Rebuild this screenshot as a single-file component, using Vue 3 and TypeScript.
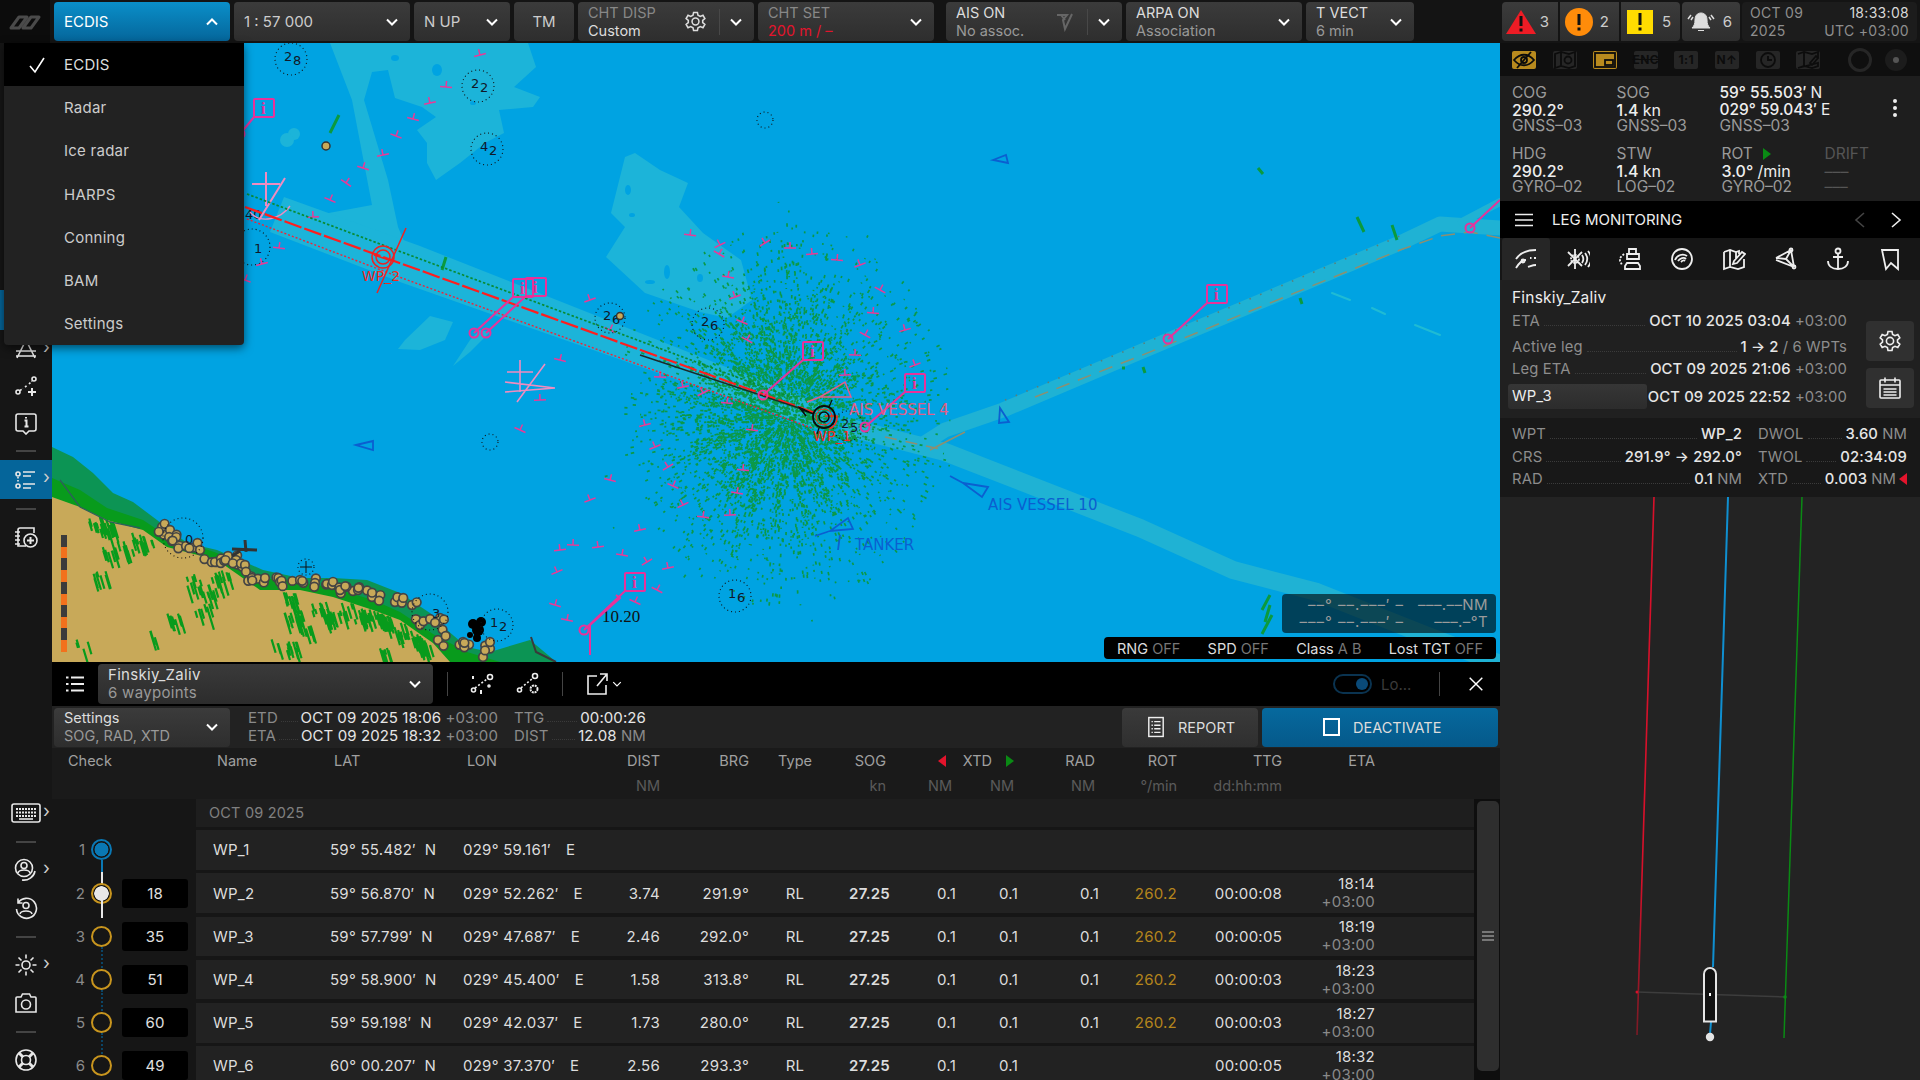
<template>
  <div class="app">
    <div class="main">
      <!-- top toolbar -->
      <div class="topbar">
        <div class="logo">
          <svg width="34" height="18" viewBox="0 0 34 18"><path d="M3 15 11 4h8l-8 11zM15 15l8-11h8l-8 11z" fill="none" stroke="#4a4a4a" stroke-width="3" stroke-linejoin="round"/></svg>
        </div>
        <button class="tb tb-mode"><span>ECDIS</span><svg class="chev" viewBox="0 0 16 16"><path d="M3 10.5l5-5 5 5"/></svg></button>
        <button class="tb w176"><span class="big">1 : 57 000</span><svg class="chev" viewBox="0 0 16 16"><path d="M3 5.5l5 5 5-5"/></svg></button>
        <button class="tb w96"><span class="big">N UP</span><svg class="chev" viewBox="0 0 16 16"><path d="M3 5.5l5 5 5-5"/></svg></button>
        <button class="tb w60 center"><span class="big">TM</span></button>
        <button class="tb w176">
          <span class="two"><i class="dim">CHT DISP</i><b>Custom</b></span>
          <svg class="gear" viewBox="0 0 24 24"><circle cx="12" cy="12" r="3.6"/><path d="M10 2.5h4l.6 3 2.4 1.2 2.8-1.2 2 3.4-2.3 2v2.2l2.3 2-2 3.4-2.8-1.2-2.4 1.2-.6 3h-4l-.6-3L7 17.3l-2.8 1.2-2-3.4 2.3-2v-2.2l-2.3-2 2-3.4L7 6.7l2.4-1.2z"/></svg>
          <span class="vsep"></span>
          <svg class="chev" viewBox="0 0 16 16"><path d="M3 5.5l5 5 5-5"/></svg>
        </button>
        <button class="tb w176">
          <span class="two"><i class="dim">CHT SET</i><b class="red">200 m / –</b></span>
          <svg class="chev" viewBox="0 0 16 16"><path d="M3 5.5l5 5 5-5"/></svg>
        </button>
        <button class="tb w176 gap-l">
          <span class="two"><b>AIS ON</b><i>No assoc.</i></span>
          <svg class="ais" viewBox="0 0 20 20"><path d="M2 3h10l-4 5 2 9 7-15M6 3l4 5"/></svg>
          <span class="vsep"></span>
          <svg class="chev" viewBox="0 0 16 16"><path d="M3 5.5l5 5 5-5"/></svg>
        </button>
        <button class="tb w176">
          <span class="two"><b>ARPA ON</b><i>Association</i></span>
          <svg class="chev" viewBox="0 0 16 16"><path d="M3 5.5l5 5 5-5"/></svg>
        </button>
        <button class="tb w108">
          <span class="two"><b>T VECT</b><i>6 min</i></span>
          <svg class="chev" viewBox="0 0 16 16"><path d="M3 5.5l5 5 5-5"/></svg>
        </button>
      </div>

      <div class="body">
        <!-- left rail -->
        <div class="rail">
          <div class="rail-spacer"></div>
          <div class="rail-item rail-hidden"></div>
          <div class="rail-item short">
            <svg class="ic" viewBox="0 0 24 24"><path d="M3 21 12 3l9 18M2 14h20M2 19h20"/></svg><em class="more">›</em>
          </div>
          <div class="rail-item short">
            <svg class="ic" viewBox="0 0 24 24"><circle cx="4" cy="18" r="2"/><circle cx="20" cy="5" r="2"/><path d="M6 16.5l3-2M11 13l2-1.5M15 10l3-3" stroke-dasharray="2 1.5"/><path d="M18 14v8M14 18h8" stroke-width="2"/></svg>
          </div>
          <div class="rail-item short">
            <svg class="ic" viewBox="0 0 24 24"><path d="M4 3h16a2 2 0 0 1 2 2v13a2 2 0 0 1-2 2h-5l-3 3-3-3H4a2 2 0 0 1-2-2V5a2 2 0 0 1 2-2z"/><path d="M10.5 9.5H12.5V15M10.5 15.5h4M12 6v1.5" stroke-width="2"/></svg>
          </div>
          <div class="rail-sep"></div>
          <div class="rail-item selected">
            <svg class="ic" viewBox="0 0 24 24"><circle cx="4" cy="6" r="2"/><circle cx="4" cy="18" r="2"/><path d="M4 9v6" stroke-dasharray="1.5 1.5"/><path d="M9 4h12M9 8h8M9 16h12M9 20h8"/></svg><em class="more">›</em>
          </div>
          <div class="rail-sep"></div>
          <div class="rail-item">
            <svg class="ic" viewBox="0 0 24 24"><path d="M20 8V3H6a2 2 0 0 0-2 2v16h8M1 7h5M1 11h5M1 15h5M1 19h5"/><circle cx="16.5" cy="15.5" r="6.5"/><path d="M16.5 12v7M13 15.5h7" stroke-width="2"/></svg>
          </div>
          <div class="rail-fill"></div>
          <div class="rail-item">
            <svg class="ic kb" viewBox="0 0 30 24"><rect x="1" y="3" width="28" height="18" rx="2"/><path d="M5 8h20M5 11.5h20M5 15h20" stroke-dasharray="2 1" stroke-width="2"/><path d="M8 18h14"/></svg><em class="more">›</em>
          </div>
          <div class="rail-sep"></div>
          <div class="rail-item">
            <svg class="ic" viewBox="0 0 24 24"><circle cx="10" cy="10" r="8.5"/><circle cx="10" cy="7.5" r="3"/><path d="M4 15c1-4 11-4 12 0M8 22c6 1 12-3 13-9"/></svg><em class="more">›</em>
          </div>
          <div class="rail-item">
            <svg class="ic" viewBox="0 0 24 24"><path d="M4 7a10 10 0 1 1-1.5 6M4 2.5V7h4.5"/><circle cx="12" cy="9.5" r="3"/><path d="M6 18c1-4 11-4 12 0"/></svg>
          </div>
          <div class="rail-sep"></div>
          <div class="rail-item">
            <svg class="ic" viewBox="0 0 24 24"><circle cx="12" cy="12" r="4"/><path d="M12 1.5v4M12 18.5v4M1.5 12h4M18.5 12h4M4.5 4.5l3 3M16.5 16.5l3 3M4.5 19.5l3-3M16.5 7.5l3-3"/></svg><em class="more">›</em>
          </div>
          <div class="rail-item">
            <svg class="ic" viewBox="0 0 24 24"><path d="M3 6h4l1.5-3h7L17 6h4a1 1 0 0 1 1 1v14H2V7a1 1 0 0 1 1-1z"/><circle cx="12" cy="13.5" r="4.5"/></svg>
          </div>
          <div class="rail-sep"></div>
          <div class="rail-item">
            <svg class="ic" viewBox="0 0 24 24"><circle cx="12" cy="12" r="10"/><circle cx="12" cy="12" r="4.5"/><path d="M5 5l4 4M19 5l-4 4M5 19l4-4M19 19l-4-4" stroke-width="3"/></svg>
          </div>
        </div>

        <div class="work">
          <!-- chart -->
          <div class="map">
            <svg class="chart" viewBox="52 43 1448 619" width="1448" height="619">
              <rect x="52" y="43" width="1448" height="619" fill="#00a3e2" />

              <!-- shallow water -->
              <g fill="#1cb4d9">
                <path d="M330 43H528L536 67 514 87 540 97 533 107 499 110 504 133 485 143 460 163 436 180 427 163 427 143 417 130 436 117 422 107 395 98 388 70 372 72 364 100 388 180 398 227 410 255 340 240 318 215 372 205 352 100Z" />
                <path d="M635 153 660 170 688 183 679 207 703 233 741 260 752 300 727 318 700 312 645 293 606 257 625 227 611 213 625 157Z" />
                <path d="M405 340 430 316 453 322 445 340 420 350 398 349Z" />
                <path d="M453 366 470 340 480 330 490 332 470 352Z" />
                <path d="M284 197 420 246 830 408 820 430 400 282 270 232Z" />
                <circle cx="294" cy="134" r="6" />
                <circle cx="287" cy="140" r="7" />
              </g>
              <g fill="#00a3e2">
                <ellipse cx="628" cy="190" rx="3" ry="5" /><ellipse cx="632" cy="215" rx="3" ry="2" /><ellipse cx="667" cy="272" rx="3" ry="7" /><ellipse cx="650" cy="282" rx="5" ry="2" />
                <ellipse cx="700" cy="278" rx="3" ry="4" /><ellipse cx="473" cy="103" rx="3" ry="2" /><ellipse cx="437" cy="70" rx="5" ry="6" /><ellipse cx="395" cy="58" rx="4" ry="3" />
              </g>
              <g fill="none" stroke="#1fb2d4" stroke-linejoin="round" stroke-linecap="round">
                <path d="M850 428 945 452 1140 528 1233 570 1317 592 1423 634 1500 664" stroke-width="18" />
                <path d="M920 446 945 430 1003 410 1140 352 1400 243 1440 224 1500 228" stroke-width="15" />
                <path d="M1462 222 1500 202" stroke-width="8" />
                <path d="M1332 293 1350 300M1372 308 1385 314M1415 325 1440 335" stroke="#3cc" stroke-width="2" opacity=".6" />
              </g>
              <g fill="none" stroke="#8d8f70" stroke-width="1.5">
                <path d="M1035 397 1140 356 1400 250 1440 236 1470 232 1500 238" stroke-dasharray="14 9" />
                <path d="M885 437 945 450" stroke-dasharray="12 9" />
                <path d="M930 450 965 432" />
              </g>
              <path d="M1005 400 1140 345 1400 236" fill="none" stroke="#5a7f7a" stroke-width="1.6" stroke-dasharray="1.5 10" />

              <!-- ridge of green dots -->
              <path :d="scatter" fill="none" stroke="#0b9947" stroke-width="1.7" />

              <!-- isolated green marks -->
              <path d="M339 115 330 133M446 257 442 270M1258 168 1263 174M1357 217 1364 232M1392 225 1397 240M1143 367 1145 373M1122 368h3M1300 298l2 6M1270 595 1262 610M1270 605 1265 622M1272 615 1262 634" fill="none" stroke="#0b9a3e" stroke-width="3" />

              <!-- coast -->
              <path d="M52 447 73 457 93 473 113 493 133 502 157 520 187 543 217 550 263 570 300 578 333 578 367 580 400 593 430 613 447 630 467 647 490 652 530 640 548 655 556 662H52Z" fill="#0c9454" />
              <path d="M52 478 80 490 107 508 143 520 167 536 217 553 260 578 300 582 333 588 373 600 400 612 433 634 467 652 500 662H52Z" fill="#089b1c" />
              <path d="M52 497 80 507 107 520 143 530 167 547 217 560 260 590 300 590 333 597 373 610 400 620 433 643 450 662H52Z" fill="#c8a959" />
              <path :d="landGreen" fill="none" stroke="#089b1c" stroke-width="2.2" />
              <path d="M60 480 80 507 110 522 140 528" fill="none" stroke="#2d5f5a" stroke-width="1.3" />
              <path d="M531 637 536 652 556 662" fill="none" stroke="#3a3a3a" stroke-width="2" />

              <!-- depth scale -->
              <g>
                <rect x="61" y="535" width="6" height="117" fill="#f2711c" />
                <path d="M64 535v12M64 558v12M64 582v12M64 605v12M64 628v12" stroke="#3b3b3b" stroke-width="6" />
              </g>

              <!-- coastal rocks -->
              <g fill="#c8a959" stroke="#444" stroke-width="1.7">
                <circle v-for="(c, i) in rocks" :key="i" :cx="c[0]" :cy="c[1]" r="4.3" />
              </g>
              <path d="M232 549 257 550M245 540 246 552M240 551 232 556" fill="none" stroke="#333" stroke-width="3" />
              <g fill="#000">
                <circle cx="473" cy="624" r="5" /><circle cx="481" cy="622" r="5" /><circle cx="478" cy="630" r="6" /><circle cx="470" cy="635" r="3" /><circle cx="477" cy="638" r="4" />
              </g>

              <!-- soundings -->
              <g fill="none" stroke="#111" stroke-width="1.1" stroke-dasharray="1 3">
                <circle v-for="(s, i) in soundings" :key="i" :cx="s.x" :cy="s.y" :r="s.r" />
              </g>
              <g class="sound">
                <template v-for="(s, i) in soundings" :key="i">
                  <text v-if="s.a" :x="s.x - 7" :y="s.y + 2">{{ s.a }}</text>
                  <text v-if="s.b" :x="s.x + 2" :y="s.y + 6">{{ s.b }}</text>
                </template>
                <text x="245" y="219">40</text>
              </g>
              <text x="602" y="622" class="depth">10.20</text>
              <circle cx="326" cy="146" r="4" fill="#c8a959" stroke="#333" stroke-width="1.5" />
              <circle cx="620" cy="316" r="3.5" fill="#c8a959" stroke="#333" stroke-width="1.5" />
              <path d="M300 567h12M306 561v12" stroke="#111" stroke-width="1" />

              <!-- boundary ticks -->
              <path :d="ticks" fill="none" stroke="#e83a98" stroke-width="1.5" />

              <!-- anchorage symbols -->
              <g fill="none" stroke="#f08cc0" stroke-width="1.3">
                <path d="M266 172v34M252 184h28M285 178l-26 42" stroke-width="2" />
                <path d="M250 212c10 12 30 8 40-6" />
                <path d="M520 360v32M507 372h26M545 364l-28 38M505 382l50 6M505 392l50-4" stroke-width="1.6" />
              </g>

              <!-- planned route -->
              <path d="M247 194 388 247 790 397" fill="none" stroke="#098b33" stroke-width="1.7" stroke-dasharray="2.5 2" />
              <path d="M245 207 383 257 815 413" fill="none" stroke="#ff1e1e" stroke-width="2.2" stroke-dasharray="18 3" />
              <path d="M247 219 402 278 812 428" fill="none" stroke="#f0233a" stroke-width="1.4" stroke-dasharray="2 2" />
              <path d="M640 355 805 410" fill="none" stroke="#1a2a2a" stroke-width="1.5" />
              <g fill="none" stroke="#ee2222" stroke-width="1.5">
                <circle cx="383" cy="257" r="11" /><circle cx="383" cy="257" r="7" />
                <path d="M406 228 377 293M374 255 392 261" />
              </g>
              <text x="362" y="281" class="wp">WP_2</text>
              <text x="813" y="441" class="wp">WP_1</text>

              <!-- info marks -->
              <g v-for="(m, i) in infos" :key="i" fill="none" stroke="#e8329a" stroke-width="2">
                <path :d="`M${m.x - 10} ${m.y + 9}L${m.tx} ${m.ty}`" />
                <circle :cx="m.tx" :cy="m.ty" r="4.5" />
                <rect v-if="m.box" :x="m.x - 10" :y="m.y - 9" width="20" height="18" rx="1" />
                <text v-if="m.box" :x="m.x - 3" :y="m.y + 6" class="info-i">i</text>
              </g>
              <path d="M590 655V625L620 598 616 595" fill="none" stroke="#e8329a" stroke-width="2" />

              <!-- targets -->
              <g fill="none" stroke="#0b5fd0" stroke-width="1.8">
                <path d="M853 529 848 518 830 531ZM830 531 815 536M840 535 838 550" />
                <path d="M988 487 982 497 963 483ZM963 483 950 476" />
                <path d="M1000 408 1009 422 999 423Z" />
                <path d="M356 445 373 441 373 450Z" />
                <path d="M993 160 1006 155 1008 163Z" />
              </g>
              <text x="855" y="550" class="tgt">TANKER</text>
              <text x="988" y="510" class="tgt">AIS VESSEL 10</text>
              <path d="M820 397 845 382 851 397ZM807 402 820 397" fill="none" stroke="#e35d88" stroke-width="1.5" />
              <text x="849" y="415" class="tgt pink">AIS VESSEL 4</text>

              <!-- own ship -->
              <g fill="none" stroke="#0b0b0b">
                <path d="M825 416h12a12 12 0 0 1-8 13" stroke="#ff2a1a" stroke-width="1.5" />
                <circle cx="824" cy="417" r="11" stroke-width="1.8" />
                <circle cx="824" cy="417" r="5" stroke-width="1.5" />
                <path d="M809 412 800 408 806 416M800 409 814 414" stroke-width="1.6" />
                <path d="M829 407 832 400M819 428 817 434" stroke-width="1.2" />
              </g>
              <circle cx="824" cy="417" r="8" fill="none" stroke="#ff2a1a" stroke-width="1" />
            </svg>

            <!-- cursor readout -->
            <div class="readout">
              <div class="ro-row"><span class="ro-l">––° ––.–––′ –</span><span>–––.––<i>NM</i></span></div>
              <div class="ro-row"><span class="ro-l">–––° ––.–––′ –</span><span>–––.–°<i>T</i></span></div>
            </div>
            <div class="status">
              <span>RNG <i>OFF</i></span>
              <span>SPD <i>OFF</i></span>
              <span>Class <i>A B</i></span>
              <span>Lost TGT <i>OFF</i></span>
            </div>
          </div>

          <!-- route panel -->
          <div class="route">
            <div class="route-head">
              <svg class="ic list" viewBox="0 0 20 20"><path d="M6 3.5h13M6 10h13M6 16.5h13M1 3.5h2.5M1 10h2.5M1 16.5h2.5" stroke-width="1.8" /></svg>
              <button class="tb route-select">
                <span class="two wide"><b>Finskiy_Zaliv</b><i>6 waypoints</i></span>
                <svg class="chev" viewBox="0 0 16 16"><path d="M3 5.5l5 5 5-5" /></svg>
              </button>
              <span class="hsep"></span>
              <svg class="ic ri first" viewBox="0 0 24 24"><circle cx="3.5" cy="18" r="2" /><circle cx="20" cy="5" r="2.5" /><circle cx="19" cy="14" r="1" /><path d="M5 16 17 7" stroke-dasharray="2 2" /><path d="M11 18v4M3 4v3" stroke-width="2" /></svg>
              <svg class="ic ri" viewBox="0 0 24 24"><circle cx="3.5" cy="18" r="2" /><circle cx="19" cy="4" r="2.5" /><circle cx="18" cy="17" r="3.5" stroke-dasharray="2 .8" stroke-width="2" /><path d="M5 16 17 6" stroke-dasharray="2 2" /></svg>
              <span class="hsep sep2"></span>
              <svg class="ic export" viewBox="0 0 24 24"><path d="M11 4H2v18h18v-9M11 14 21 2M14 2h7v7" /></svg>
              <svg class="chev small" viewBox="0 0 16 16"><path d="M3 5.5l5 5 5-5" /></svg>
              <span class="fill"></span>
              <span class="toggle"><span class="knob"></span></span>
              <span class="lo">Lo...</span>
              <span class="hsep sep3"></span>
              <svg class="ic close" viewBox="0 0 20 20"><path d="M3 3l14 14M17 3 3 17" /></svg>
            </div>

            <div class="route-sub">
              <button class="tb w176">
                <span class="two"><b>Settings</b><i>SOG, RAD, XTD</i></span>
                <svg class="chev" viewBox="0 0 16 16"><path d="M3 5.5l5 5 5-5" /></svg>
              </button>
              <div class="times">
                <div class="t-row"><span class="t-l">ETD</span><span class="t-d"></span><span class="t-v">OCT 09 2025 18:06 <i>+03:00</i></span></div>
                <div class="t-row"><span class="t-l">ETA</span><span class="t-d"></span><span class="t-v">OCT 09 2025 18:32 <i>+03:00</i></span></div>
              </div>
              <div class="times small-t">
                <div class="t-row"><span class="t-l">TTG</span><span class="t-d"></span><span class="t-v">00:00:26</span></div>
                <div class="t-row"><span class="t-l">DIST</span><span class="t-d"></span><span class="t-v">12.08 <i>NM</i></span></div>
              </div>
              <span class="fill"></span>
              <button class="tb btn-report">
                <svg class="ic" viewBox="0 0 20 24"><rect x="2" y="1.5" width="16" height="21" /><path d="M5 6h1.5M8 6h7M5 10h1.5M8 10h7M5 14h1.5M8 14h7M5 18h1.5M8 18h7" /></svg>
                <span>REPORT</span>
              </button>
              <button class="tb btn-deact">
                <span class="sq"></span>
                <span>DEACTIVATE</span>
              </button>
            </div>

            <div class="thead">
              <div class="th-check">Check</div>
              <div class="cells">
                <span class="c-name th">Name</span><span class="c-lat th">LAT</span><span class="c-lon th">LON</span>
                <span class="r th">DIST<small>NM</small></span>
                <span class="r th nounit">BRG</span>
                <span class="c th">Type</span>
                <span class="r th adj">SOG<small>kn</small></span>
                <span class="th xtd-h">
                  <span class="xtd-t"><i class="tri-l"></i>XTD<i class="tri-r"></i></span>
                  <span class="xtd-u"><small>NM</small><small>NM</small></span>
                </span>
                <span class="r th adj">RAD<small>NM</small></span>
                <span class="r th">ROT<small>°/min</small></span>
                <span class="r th">TTG<small>dd:hh:mm</small></span>
                <span class="r th">ETA</span>
              </div>
            </div>

            <div class="tbody">
              <div class="rows">
                <div class="wp-row date-row">
                  <div class="wp-check"></div>
                  <div class="date-cell">OCT 09 2025</div>
                </div>
                <div v-for="(w, i) in waypoints" :key="w.name" class="wp-row">
                  <div class="wp-check">
                    <span class="wp-num">{{ i + 1 }}</span>
                    <span class="wp-mark" :class="{ first: i === 0, cur: i === 1 }"><span v-if="i < 5" class="wp-link"></span></span>
                    <span v-if="w.check" class="wp-input">{{ w.check }}</span>
                  </div>
                  <div class="cells cell-row">
                    <span class="c-name">{{ w.name }}</span>
                    <span class="c-lat">{{ w.lat }}<em>N</em></span>
                    <span class="c-lon">{{ w.lon }}<em>E</em></span>
                    <span class="r">{{ w.dist }}</span>
                    <span class="r">{{ w.brg }}</span>
                    <span class="c">{{ w.dist ? 'RL' : '' }}</span>
                    <span class="r strong">{{ w.dist ? '27.25' : '' }}</span>
                    <span class="r">{{ w.dist ? '0.1' : '' }}</span>
                    <span class="r">{{ w.dist ? '0.1' : '' }}</span>
                    <span class="r">{{ w.rot ? '0.1' : '' }}</span>
                    <span class="r gold">{{ w.rot }}</span>
                    <span class="r">{{ w.ttg }}</span>
                    <span class="r eta"><template v-if="w.eta">{{ w.eta }}<i>+03:00</i></template></span>
                  </div>
                </div>
              </div>
              <div class="scroll"><div class="thumb"><span class="grip"></span></div></div>
            </div>
          </div>
        </div>
      </div>

      <!-- mode menu -->
      <div class="menu">
        <div v-for="(m, i) in modes" :key="m" class="menu-item" :class="{ sel: i === 0 }">
          <svg v-if="i === 0" class="check" viewBox="0 0 18 18"><path d="M2 10l5 6 9-14" /></svg>
          {{ m }}
        </div>
      </div>
    </div>

    <!-- right side -->
    <div class="side">
      <div class="alerts">
        <div class="alert-group">
          <div class="alert">
            <svg width="32" height="26" viewBox="0 0 32 26"><path d="M16 1 31 25H1Z" fill="#ee1c25" /><path d="M16 7v10M16 19.5v3" stroke="#111" stroke-width="3" /></svg>
            <span>3</span>
          </div>
          <div class="alert">
            <svg width="28" height="28" viewBox="0 0 28 28"><circle cx="14" cy="14" r="14" fill="#ff8c0a" /><path d="M14 6v11M14 19.5v3" stroke="#111" stroke-width="3" /></svg>
            <span>2</span>
          </div>
          <div class="alert">
            <svg width="26" height="24" viewBox="0 0 26 24"><rect width="26" height="24" fill="#ffdc00" /><path d="M13 3v12M13 17.5v3" stroke="#111" stroke-width="3" /></svg>
            <span>5</span>
          </div>
        </div>
        <div class="alert alert-bell">
          <svg width="28" height="22" viewBox="0 0 28 22"><path d="M14 2c4 0 6 3 6 7 0 4 1 6 3 8H5c2-2 3-4 3-8 0-4 2-7 6-7zM11 19.5h6" fill="#ddd" stroke="#ddd" /><path d="M4 4 1 8M24 4l3 4M6 6 4 9M22 6l2 3" stroke="#ddd" stroke-width="1.5" /></svg>
          <span>6</span>
        </div>
        <div class="clock">
          <div><span>OCT 09</span><b>18:33:08</b></div>
          <div><span>2025</span><span>UTC +03:00</span></div>
        </div>
      </div>

      <div class="chart-tools">
        <span class="ct on"><svg viewBox="0 0 24 18"><path d="M2 9c6-7 14-7 20 0-6 7-14 7-20 0z" /><circle cx="12" cy="9" r="3" /><path d="M5 17 19 1" /></svg></span>
        <span class="ct"><svg viewBox="0 0 24 18"><path d="M2 3l6-2 8 2 6-2v14l-6 2-8-2-6 2zM8 1v14" /><circle cx="15" cy="9" r="3.5" /></svg></span>
        <span class="ct on"><svg viewBox="0 0 24 18"><rect x="2" y="2" width="20" height="14" /><rect x="12" y="9" width="8" height="5" /></svg></span>
        <span class="ct txt strike">ENC</span>
        <span class="ct txt">1:1</span>
        <span class="ct txt">N↑</span>
        <span class="ct"><svg viewBox="0 0 24 18"><circle cx="12" cy="9" r="7" /><path d="M12 5v4h4" /></svg></span>
        <span class="ct"><svg viewBox="0 0 24 18"><path d="M2 3l6-2 8 2 6-2v6M22 12v3l-6 2-8-2-6 2zM8 1v14M14 12l6-7 2 2-6 7z" /></svg></span>
        <span class="ring"></span>
        <span class="dot-btn"><i></i></span>
      </div>

      <div class="nav-data">
        <div class="nav-row">
          <div class="nav-c c1"><span>COG</span><b>290.2°</b><span>GNSS–03</span></div>
          <div class="nav-c c2"><span>SOG</span><b>1.4 <u>kn</u></b><span>GNSS–03</span></div>
          <div class="nav-c c3"><b>59° 55.503′ <u>N</u></b><b>029° 59.043′ <u>E</u></b><span>GNSS–03</span></div>
          <div class="kebab"><i></i><i></i><i></i></div>
        </div>
        <div class="nav-row">
          <div class="nav-c c1"><span>HDG</span><b>290.2°</b><span>GYRO–02</span></div>
          <div class="nav-c c2"><span>STW</span><b>1.4 <u>kn</u></b><span>LOG–02</span></div>
          <div class="nav-c c3b"><span class="rot">ROT<i class="tri-r"></i></span><b>3.0° <u>/min</u></b><span>GYRO–02</span></div>
          <div class="nav-c dimmed"><span>DRIFT</span><b>–––</b><span>–––</span></div>
        </div>
      </div>

      <div class="leg-head">
        <svg class="ic burger" viewBox="0 0 18 14"><path d="M0 1.5h18M0 7h18M0 12.5h18" stroke-width="1.6" /></svg>
        <span class="leg-title">LEG MONITORING</span>
        <span class="fill"></span>
        <svg class="ic arrow off" viewBox="0 0 12 16"><path d="M10 1 2 8l8 7" /></svg>
        <svg class="ic arrow" viewBox="0 0 12 16"><path d="M2 1l8 7-8 7" /></svg>
      </div>

      <div class="tabs">
        <div class="tab current"><svg class="ic" viewBox="0 0 24 24"><path d="M2 12C6 6 12 3 22 3M2 21c3-5 6-8 10-8M14 20c3-1 5-2 8-2M16 11h1.5M20 11h2" /><circle cx="9" cy="14" r="1.5" /></svg></div>
        <div class="tab"><svg class="ic" viewBox="0 0 24 24"><circle cx="9" cy="12" r="4" stroke-dasharray="2 1" /><path d="M9 2v20M2 5l14 14M16 5 2 19M16 8c2 3 2 5 0 8M19 6c3 4 3 8 0 12M22 4c4 5 4 11 0 16" /></svg></div>
        <div class="tab"><svg class="ic" viewBox="0 0 24 24"><path d="M11 2h7v5h-7zM9 7h12v5H9zM9 16h11l2 3v3H7v-3z" /><path d="M6 7 2 11v3l2 4" stroke-dasharray="2 1.5" /></svg></div>
        <div class="tab"><svg class="ic" viewBox="0 0 24 24"><circle cx="12" cy="12" r="10" /><path d="M5 13c2-5 8-7 12-4M8 14c2-3 6-4 8-2M11 15c1-1 3-2 4-1" stroke-width="1.8" /></svg></div>
        <div class="tab"><svg class="ic" viewBox="0 0 24 24"><path d="M2 5l6-2 6 2 3-1v3M22 12v8l-6 2-8-2-6 2V5M8 3v17M14 5v8M12 14l8-9 3 2-8 9-4 1z" /></svg></div>
        <div class="tab"><svg class="ic" viewBox="0 0 24 24"><path d="M2 11l10 1M17 3 2 11M17 3l3 17M2 13l18 7M12 12l5-9M12 12l8 8" /><circle cx="17" cy="3" r="1.5" /><circle cx="20" cy="20" r="1.5" /></svg></div>
        <div class="tab"><svg class="ic" viewBox="0 0 24 24"><circle cx="12" cy="4" r="2.5" /><path d="M12 6.5V22M7 10h10M2 14c0 5 4 8 10 8s10-3 10-8" stroke-width="1.8" /></svg></div>
        <div class="tab"><svg class="ic" viewBox="0 0 24 24"><path d="M4 3h16v19l-7-6-5 6z" /></svg></div>
      </div>

      <div class="leg-info">
        <div class="leg-left">
          <div class="leg-name">Finskiy_Zaliv</div>
          <div class="kv eta1"><span>ETA</span><s></s><b>OCT 10 2025 03:04 <i>+03:00</i></b></div>
          <div class="kv kv-active"><span>Active leg</span><s></s><b>1 → 2 <i>/ 6 WPTs</i></b></div>
          <div class="kv legeta"><span>Leg ETA</span><s></s><b>OCT 09 2025 21:06 <i>+03:00</i></b></div>
          <div class="kv wp3"><em>WP_3</em><b>OCT 09 2025 22:52 <i>+03:00</i></b></div>
        </div>
        <div class="leg-btns">
          <button class="sq-btn"><svg viewBox="0 0 24 24"><circle cx="12" cy="12" r="3.6" /><path d="M10 2.5h4l.6 3 2.4 1.2 2.8-1.2 2 3.4-2.3 2v2.2l2.3 2-2 3.4-2.8-1.2-2.4 1.2-.6 3h-4l-.6-3L7 17.3l-2.8 1.2-2-3.4 2.3-2v-2.2l-2.3-2 2-3.4L7 6.7l2.4-1.2z" /></svg></button>
          <button class="sq-btn"><svg viewBox="0 0 24 24"><rect x="2" y="4" width="20" height="18" rx="1" /><path d="M2 9h20M7 1.5v5M17 1.5v5M5.5 13h13M5.5 16h13M5.5 19h13" /></svg></button>
        </div>
      </div>

      <div class="leg-stats">
        <div class="stat-col">
          <div class="kv"><span>WPT</span><s></s><b>WP_2</b></div>
          <div class="kv"><span>CRS</span><s></s><b>291.9° → 292.0°</b></div>
          <div class="kv"><span>RAD</span><s></s><b>0.1 <i>NM</i></b></div>
        </div>
        <div class="stat-col narrow">
          <div class="kv"><span>DWOL</span><s></s><b>3.60 <i>NM</i></b></div>
          <div class="kv"><span>TWOL</span><s></s><b>02:34:09</b></div>
          <div class="kv xtd"><span>XTD</span><s></s><b>0.003 <i>NM</i></b><i class="tri-l"></i></div>
        </div>
      </div>

      <div class="tunnel">
        <svg viewBox="1500 497 420 583" width="420" height="583">
          <defs>
            <linearGradient id="redfade" x1="0" y1="0" x2="0" y2="1"><stop offset=".7" stop-color="#d8102a" /><stop offset="1" stop-color="#7a1a25" /></linearGradient>
          </defs>
          <path d="M1654 497 1637 1035" stroke="url(#redfade)" stroke-width="1.6" fill="none" />
          <path d="M1728 497 1713 967M1711 1022 1710 1034" stroke="#0f8fd0" stroke-width="2" fill="none" />
          <path d="M1802 497 1784 1038" stroke="#0a8a14" stroke-width="1.5" fill="none" />
          <path d="M1637 992 1785 997" stroke="#3d3d3d" stroke-width="1.5" fill="none" />
          <circle cx="1785" cy="997" r="1.8" fill="#0a8a14" />
          <circle cx="1637" cy="992" r="1.5" fill="#d8102a" />
          <path d="M1704 1021.5V974a6 6 0 0 1 12 0v47.5Z" fill="#111" stroke="#e4e4e4" stroke-width="2" />
          <rect x="1709" y="993" width="2" height="3" fill="#fff" />
          <circle cx="1710" cy="1037" r="4.2" fill="#e4e4e4" />
        </svg>
      </div>
    </div>
  </div>
</template>

<script setup lang="ts">
interface Waypoint {
  name: string
  lat: string
  lon: string
  check: string
  dist: string
  brg: string
  rot: string
  ttg: string
  eta: string
}

const modes = ['ECDIS', 'Radar', 'Ice radar', 'HARPS', 'Conning', 'BAM', 'Settings']

const waypoints: Waypoint[] = [
  { name: 'WP_1', lat: '59° 55.482′', lon: '029° 59.161′', check: '', dist: '', brg: '', rot: '', ttg: '', eta: '' },
  { name: 'WP_2', lat: '59° 56.870′', lon: '029° 52.262′', check: '18', dist: '3.74', brg: '291.9°', rot: '260.2', ttg: '00:00:08', eta: '18:14' },
  { name: 'WP_3', lat: '59° 57.799′', lon: '029° 47.687′', check: '35', dist: '2.46', brg: '292.0°', rot: '260.2', ttg: '00:00:05', eta: '18:19' },
  { name: 'WP_4', lat: '59° 58.900′', lon: '029° 45.400′', check: '51', dist: '1.58', brg: '313.8°', rot: '260.2', ttg: '00:00:03', eta: '18:23' },
  { name: 'WP_5', lat: '59° 59.198′', lon: '029° 42.037′', check: '60', dist: '1.73', brg: '280.0°', rot: '260.2', ttg: '00:00:03', eta: '18:27' },
  { name: 'WP_6', lat: '60° 00.207′', lon: '029° 37.370′', check: '49', dist: '2.56', brg: '293.3°', rot: '', ttg: '00:00:05', eta: '18:32' }
]

const soundings = [
  { x: 291, y: 59, r: 16, a: '2', b: '8' },
  { x: 478, y: 86, r: 16, a: '2', b: '2' },
  { x: 487, y: 149, r: 16, a: '4', b: '2' },
  { x: 765, y: 120, r: 8, a: '', b: '' },
  { x: 252, y: 247, r: 18, a: '', b: '1' },
  { x: 610, y: 318, r: 15, a: '2', b: '6' },
  { x: 708, y: 324, r: 16, a: '2', b: '6' },
  { x: 735, y: 596, r: 16, a: '1', b: '6' },
  { x: 490, y: 442, r: 8, a: '', b: '' },
  { x: 848, y: 426, r: 15, a: '2', b: '5' },
  { x: 306, y: 567, r: 8, a: '', b: '' },
  { x: 183, y: 538, r: 20, a: '', b: '0' },
  { x: 430, y: 612, r: 18, a: '', b: '3' },
  { x: 497, y: 625, r: 16, a: '1', b: '2' }
]

const infos = [
  { x: 264, y: 108, tx: 240, ty: 134, box: true },
  { x: 523, y: 288, tx: 474, ty: 333, box: true },
  { x: 536, y: 287, tx: 486, ty: 333, box: true },
  { x: 813, y: 351, tx: 763, ty: 395, box: true },
  { x: 915, y: 383, tx: 865, ty: 427, box: true },
  { x: 1217, y: 294, tx: 1168, ty: 339, box: true },
  { x: 635, y: 582, tx: 584, ty: 630, box: true },
  { x: 1510, y: 191, tx: 1470, ty: 228, box: false }
]

// small seeded generator, the chart noise has to stay the same on every load
function seeded(a: number) {
  return () => {
    a = (a + 0x6d2b79f5) | 0
    let t = Math.imul(a ^ (a >>> 15), 1 | a)
    t = (t + Math.imul(t ^ (t >>> 7), 61 | t)) ^ t
    return ((t ^ (t >>> 14)) >>> 0) / 4294967296
  }
}

const rnd = seeded(41)

function gauss(): number {
  return Math.sqrt(-2 * Math.log(rnd() + 1e-6)) * Math.cos(2 * Math.PI * rnd())
}

function buildScatter(): string {
  const parts: string[] = []
  const cx = 790
  const cy = 416
  const put = (x: number, y: number) => {
    const a = Math.atan2(y - cy, x - cx)
    const l = 1 + rnd() * 2.6
    parts.push(`M${x.toFixed(1)} ${y.toFixed(1)}l${(Math.cos(a) * l).toFixed(1)} ${(Math.sin(a) * l).toFixed(1)}`)
  }
  // dense core, a little heavier on the west side, loosely clumped along rays
  for (let i = 0; i < 6200; i++) {
    const x = cx - 8 + gauss() * 50
    const y = cy + gauss() * 58
    const a = Math.atan2(y - cy, x - cx)
    if (Math.sin(a * 23) < -0.35 && rnd() < 0.7) continue
    put(x, y)
  }
  // thin outer fringe, thinning out with distance
  for (let i = 0; i < 1300; i++) {
    const a = rnd() * Math.PI * 2
    const d = Math.pow(rnd(), 0.8) * 190
    if (Math.cos(a) > 0.3 && rnd() < 0.3) continue
    put(cx + Math.cos(a) * d * 0.84, cy + Math.sin(a) * d)
  }
  return parts.join('')
}

// top of the land, used to keep the green streaks on shore
const landTop: [number, number][] = [[52, 497], [107, 520], [167, 547], [217, 560], [260, 590], [333, 597], [400, 620], [450, 662]]
function topAt(x: number): number {
  for (let i = 1; i < landTop.length; i++) {
    if (x <= landTop[i][0]) {
      const [x0, y0] = landTop[i - 1]
      const [x1, y1] = landTop[i]
      return y0 + ((y1 - y0) * (x - x0)) / (x1 - x0)
    }
  }
  return 662
}

function buildLandGreen(): string {
  const parts: string[] = []
  // streaks come in small patches
  for (let i = 0; i < 44; i++) {
    const px = 70 + rnd() * 370
    const py = topAt(px) + rnd() * rnd() * (662 - topAt(px))
    const n = 3 + Math.floor(rnd() * 7)
    for (let k = 0; k < n; k++) {
      const x = px + (rnd() - 0.5) * 14
      const y = Math.max(py + (rnd() - 0.5) * 10, topAt(x))
      const l = 5 + rnd() * 13
      parts.push(`M${x.toFixed(1)} ${y.toFixed(1)}l${(l * 0.3).toFixed(1)} ${l.toFixed(1)}`)
    }
  }
  return parts.join('')
}

const tickPoints: [number, number][] = [
  [480, 55], [446, 87], [430, 103], [413, 119], [396, 136], [383, 155], [363, 168], [346, 183], [330, 200], [313, 217], [279, 248], [262, 264], [245, 280],
  [719, 254], [728, 277], [735, 297], [742, 322], [747, 340], [765, 243], [790, 248], [812, 254], [837, 260], [860, 265], [873, 313], [865, 335], [855, 355], [845, 375],
  [645, 425], [655, 447], [668, 467], [673, 486], [683, 505], [703, 517], [730, 515], [737, 493], [743, 470], [752, 430], [727, 403], [703, 393], [683, 387], [660, 377],
  [560, 550], [573, 545], [598, 547], [622, 555], [647, 562], [668, 568], [557, 572], [555, 605], [567, 620], [657, 590], [635, 602],
  [590, 300], [610, 330], [560, 360], [540, 400], [520, 430], [610, 480], [590, 500], [640, 530], [720, 245], [690, 235], [880, 290], [905, 330], [915, 365]
]

function buildTicks(): string {
  return tickPoints
    .map(([x, y]) => {
      const a = rnd() * 1.2 - 0.6
      const c = Math.cos(a) * 6
      const s = Math.sin(a) * 6
      return `M${x - c} ${y - s}L${x} ${y}L${x + s} ${y - c}M${x} ${y}L${x + c} ${y + s}`
    })
    .join('')
}

const rockPath: [number, number][] = [
  [162, 527], [170, 530], [172, 541], [186, 546], [200, 550], [215, 562], [228, 556], [236, 560], [245, 565], [252, 578], [265, 578], [280, 582], [300, 580], [315, 583], [332, 585], [340, 590], [358, 590], [372, 597], [395, 602], [412, 605], [420, 625], [440, 618], [438, 640], [463, 642], [483, 657], [490, 642]
]

function buildRocks(): [number, number][] {
  const out: [number, number][] = []
  rockPath.forEach(([x, y], i) => {
    out.push([x, y])
    const next = rockPath[i + 1]
    if (!next) return
    for (let k = 0; k < 3; k++) {
      const t = rnd()
      out.push([x + (next[0] - x) * t + (rnd() - 0.5) * 11, y + (next[1] - y) * t + (rnd() - 0.5) * 11])
    }
  })
  return out
}

const scatter = buildScatter()
const landGreen = buildLandGreen()
const ticks = buildTicks()
const rocks = buildRocks()
</script>

<style scoped>
.app {
  width: 1920px;
  height: 1080px;
  display: flex;
  overflow: hidden;
  background: #141414;
  color: #ddd;
  font-family: Inter, 'Noto Sans', sans-serif;
  font-size: 15px;
}
i, em, u, s { font-style: normal; text-decoration: none; }
.fill { flex: 1; }

.main {
  width: 1500px;
  display: flex;
  flex-direction: column;
  position: relative;
}
.side {
  width: 420px;
  display: flex;
  flex-direction: column;
  background: #232323;
}

/* toolbar */
.topbar {
  height: 43px;
  display: flex;
  align-items: center;
  gap: 4px;
  background: #141414;
  flex: none;
}
.logo { width: 50px; height: 43px; display: flex; align-items: center; justify-content: center; background: #0c0c0c; }
.tb {
  height: 39px;
  display: flex;
  align-items: center;
  justify-content: space-between;
  padding: 0 10px;
  border: 0;
  border-radius: 4px;
  background: linear-gradient(#3b3b3b, #2e2e2e);
  color: #ddd;
  font: inherit;
  text-align: left;
  flex: none;
}
.tb-mode { width: 176px; background: linear-gradient(#0a8fc9, #05669b); color: #fff; }
.w176 { width: 176px; }
.w96 { width: 96px; }
.w60 { width: 60px; }
.w108 { width: 108px; }
.center { justify-content: center; }
.gap-l { margin-left: 8px; }
.big { color: #ccc; font-size: 15px; }
.chev { width: 16px; height: 16px; fill: none; stroke: #fff; stroke-width: 2; flex: none; }
.two { display: flex; flex-direction: column; line-height: 18px; font-size: 14.5px; flex: 1; }
.two.wide { font-size: 15px; letter-spacing: .3px; }
.two b { font-weight: 400; color: #ddd; }
.two i { color: #999; }
.two i.dim { color: #888; }
.two b.red { color: #e3142c; }
.gear { width: 23px; height: 23px; fill: none; stroke: #ddd; stroke-width: 1.6; margin-right: 12px; }
.ais { width: 20px; height: 20px; fill: none; stroke: #666; stroke-width: 2; margin-right: 12px; }
.vsep { width: 1px; height: 26px; background: #484848; margin-right: 8px; }

/* rail */
.body { flex: 1; display: flex; min-height: 0; }
.rail { width: 52px; display: flex; flex-direction: column; background: #161616; padding-bottom: 1px; flex: none; }
.rail-spacer { height: 247px; }
.rail-fill { flex: 1; }
.rail-item {
  height: 38px;
  display: flex;
  align-items: center;
  justify-content: center;
  position: relative;
  color: #e8e8e8;
  flex: none;
}
.rail-item.short { height: 37px; }
.rail-hidden { background: #05669b; height: 40px; }
.rail-item.selected { height: 39px; background: #05659a; }
.rail-item .ic { width: 24px; height: 24px; }
.rail-item .kb { width: 30px; }
.more { position: absolute; right: 2px; top: 7px; font-size: 18px; line-height: 20px; color: #ccc; }
.rail-sep { height: 19px; display: flex; align-items: center; justify-content: center; flex: none; }
.rail-sep::before { content: ''; width: 20px; height: 2px; background: #444; }
.ic { fill: none; stroke: currentColor; stroke-width: 1.6; display: block; }

/* work area */
.work { width: 1448px; display: flex; flex-direction: column; }
.map { height: 619px; position: relative; overflow: hidden; flex: none; background: #00a3e2; }
.chart { display: block; }
.sound text { font-family: 'DejaVu Sans', sans-serif; font-size: 13px; fill: #101828; }
.depth { font-family: 'Liberation Serif', serif; font-size: 17px; fill: #111; }
.wp { font-family: 'DejaVu Sans', sans-serif; font-size: 14px; fill: #f02a20; stroke: none; }
.tgt { font-family: 'DejaVu Sans', sans-serif; font-size: 15px; fill: #0b5fd0; }
.tgt.pink { fill: #e35d88; }
.info-i { font-family: 'Liberation Serif', serif; font-size: 16px; font-weight: 700; fill: #e8329a; stroke: none; }

.readout {
  position: absolute;
  left: 1230px;
  top: 551px;
  width: 214px;
  height: 39px;
  padding: 2px 8px 0 6px;
  background: rgba(0, 0, 0, 0.6);
  border-radius: 4px;
  color: #9b9b9b;
  font-size: 15px;
  line-height: 17px;
  box-sizing: border-box;
}
.ro-row { display: flex; justify-content: space-between; white-space: nowrap; letter-spacing: .4px; }
.ro-l { width: 116px; text-align: right; letter-spacing: 1px; }
.status {
  position: absolute;
  left: 1052px;
  top: 594px;
  width: 392px;
  height: 22px;
  display: flex;
  align-items: center;
  justify-content: space-between;
  padding: 0 13px;
  box-sizing: border-box;
  background: #000;
  border-radius: 4px;
  color: #ddd;
  font-size: 14.5px;
}
.status i { color: #777; }

/* route panel */
.route { flex: 1; display: flex; flex-direction: column; min-height: 0; background: #161616; }
.route-head { height: 44px; display: flex; align-items: center; background: #000; flex: none; }
.list { width: 20px; height: 20px; color: #eee; margin-left: 13px; }
.route-select { width: 335px; height: 40px; margin-left: 13px; background: linear-gradient(#3a3a3a, #2c2c2c); }
.hsep { width: 1px; height: 24px; background: #444; margin-left: 14px; }
.ri { width: 24px; height: 24px; color: #eee; margin-left: 22px; }
.ri.first { margin-left: 22px; }
.sep2 { margin-left: 22px; }
.export { width: 24px; height: 24px; color: #eee; margin-left: 23px; }
.chev.small { width: 12px; height: 12px; stroke-width: 1.6; margin-left: 1px; }
.toggle { width: 39px; height: 20px; border: 2px solid #0a3350; border-radius: 11px; box-sizing: border-box; display: flex; justify-content: flex-end; align-items: center; padding-right: 2px; }
.knob { width: 12px; height: 12px; border-radius: 50%; background: #0a4a78; }
.lo { color: #3a3a3a; margin-left: 9px; width: 40px; }
.sep3 { margin-left: 18px; }
.close { width: 18px; height: 18px; color: #fff; margin: 0 15px 0 27px; }

.route-sub { height: 42px; display: flex; align-items: center; background: #222; padding: 0 2px; flex: none; }
.times { margin-left: 18px; width: 250px; line-height: 18px; font-size: 15px; letter-spacing: .1px; }
.small-t { margin-left: 16px; width: 132px; }
.t-row { display: flex; align-items: center; white-space: nowrap; }
.t-l { color: #8a8a8a; }
.t-d { flex: 1; height: 1px; margin: 6px 3px 0; border-bottom: 1px dotted #3a3a3a; }
.t-v { color: #e6e6e6; }
.t-v i { color: #8a8a8a; }
.btn-report { width: 136px; justify-content: flex-start; padding-left: 25px; gap: 13px; background: linear-gradient(#3a3a3a, #2f2f2f); font-size: 14.5px; }
.btn-report .ic { width: 18px; height: 24px; color: #eee; }
.btn-deact { width: 236px; margin-left: 4px; justify-content: flex-start; padding-left: 61px; gap: 13px; background: linear-gradient(#06699e, #05598a); color: #ddd; font-size: 14.5px; }
.sq { width: 13px; height: 14px; border: 2px solid #fff; }

.thead { height: 51px; display: flex; background: #1a1a1a; color: #a0a0a0; flex: none; font-size: 14.5px; }
.th-check { width: 144px; padding: 4px 0 0 16px; box-sizing: border-box; line-height: 18px; }
.cells {
  display: grid;
  grid-template-columns: 134px 133px 137px 60px 89px 92px 49px 66px 62px 81px 78px 105px 93px;
  width: 1179px;
  align-items: center;
}
.thead .cells { align-items: start; padding-top: 4px; line-height: 18px; }
.th small { display: block; font-size: 14.5px; color: #5a5a5a; margin-top: 7px; }
.th.c-name { padding-left: 21px; }
.th.c-lat, .th.c-lon { padding-left: 4px; }
.th.adj { padding-right: 4px; }
.c { text-align: center; }
.r { text-align: right; }
.xtd-h { grid-column: span 2; padding-right: 4px; }
.xtd-t { display: flex; align-items: center; justify-content: flex-end; gap: 14px; }
.xtd-t .tri-l { margin-right: 3px; }
.xtd-u { display: grid; grid-template-columns: 62px 62px; justify-content: end; text-align: right; padding-right: 0; }
.xtd-u small { margin-top: 7px; }
.tri-l { display: inline-block; width: 0; height: 0; border: 6px solid transparent; border-left: 0; border-right: 8px solid #e3142c; }
.tri-r { display: inline-block; width: 0; height: 0; border: 6px solid transparent; border-right: 0; border-left: 8px solid #0a8a14; }

.tbody { flex: 1; display: flex; min-height: 0; overflow: hidden; }
.rows { width: 1422px; display: flex; flex-direction: column; gap: 3.6px; flex: none; }
.wp-row { display: flex; height: 39.6px; flex: none; }
.date-row { height: 27.6px; }
.wp-check { width: 144px; display: flex; align-items: center; color: #8a8a8a; flex: none; }
.date-cell { flex: 1; background: #1e1e1e; color: #808080; padding-left: 13px; line-height: 27.6px; font-size: 14.5px; letter-spacing: .2px; }
.wp-num { width: 33px; text-align: right; }
.wp-mark {
  width: 21px;
  height: 21px;
  margin-left: 6px;
  border: 2px solid #c8951e;
  border-radius: 50%;
  box-sizing: border-box;
  position: relative;
  flex: none;
}
.wp-mark.first { border-color: #0a78b4; background: radial-gradient(#0a78b4 55%, transparent 60%); }
.wp-mark.cur { background: radial-gradient(#e8e8e8 58%, transparent 62%); }
.wp-link {
  position: absolute;
  left: 7.5px;
  top: 19px;
  height: 24px;
  width: 0;
  border-left: 2px dotted #0b4566;
}
.first .wp-link { border-left: 2px solid #e8e8e8; border-image: linear-gradient(#0a78b4 50%, #e8e8e8 50%) 1; }
.cur .wp-link { border-left: 2px solid #e8e8e8; height: 24px; top: 9px; }
.wp-input {
  width: 66px;
  height: 29px;
  margin-left: 10px;
  display: flex;
  align-items: center;
  justify-content: center;
  background: #000;
  border-radius: 3px;
  color: #e0e0e0;
}
.cell-row { background: #222; color: #ddd; height: 100%; flex: none; width: 1278px; letter-spacing: .25px; }
.c-name { padding-left: 17px; }
.c-lat em { margin-left: 9px; color: #ddd; }
.c-lon em { margin-left: 15px; color: #ddd; }
.strong { font-weight: 600; }
.gold { color: #b5851c; }
.eta { line-height: 18px; }
.eta i { display: block; color: #8a8a8a; }
.scroll { width: 26px; background: #0e0e0e; padding: 2px 1px 0 3px; box-sizing: border-box; flex: none; }
.thumb { height: 270px; background: #2e2e2e; border-radius: 5px; display: flex; align-items: center; justify-content: center; }
.grip { width: 12px; height: 10px; border-top: 2px solid #777; border-bottom: 2px solid #777; background: linear-gradient(#777, #777) center / 100% 2px no-repeat; box-sizing: border-box; }

/* mode menu */
.menu {
  position: absolute;
  left: 4px;
  top: 43px;
  width: 240px;
  height: 302px;
  background: #222;
  border-radius: 0 0 4px 4px;
  box-shadow: 0 3px 10px rgba(0, 0, 0, 0.55);
  overflow: hidden;
}
.menu-item { height: 43.2px; line-height: 43px; padding-left: 60px; color: #ccc; position: relative; letter-spacing: .25px; }
.menu-item.sel { background: #000; color: #ddd; }
.check { position: absolute; left: 24px; top: 13px; width: 18px; height: 18px; fill: none; stroke: #fff; stroke-width: 1.6; }

/* right side */
.alerts { height: 43px; display: flex; align-items: center; background: #141414; padding-left: 2px; flex: none; }
.alert-group { display: flex; gap: 2px; width: 178px; }
.alert {
  height: 39px;
  flex: 1;
  display: flex;
  align-items: center;
  justify-content: space-between;
  padding: 0 9px 0 3px;
  background: linear-gradient(#3b3b3b, #2e2e2e);
  color: #ccc;
  font-size: 15px;
}
.alert-group .alert:nth-child(2) { padding-left: 5px; padding-right: 10px; }
.alert-group .alert:first-child { border-radius: 4px 0 0 4px; }
.alert-group .alert:last-child { border-radius: 0 4px 4px 0; padding-left: 6px; }
.alert-bell { flex: none; width: 58px; margin-left: 2px; border-radius: 4px; box-sizing: border-box; padding: 0 8px 0 5px; }
.clock { width: 175px; height: 39px; margin-left: 2px; background: #1c1c1c; border-radius: 4px; padding: 2px 8px; box-sizing: border-box; line-height: 18px; font-size: 14px; color: #8e8e8e; letter-spacing: .3px; }
.clock div { display: flex; justify-content: space-between; }
.clock b { font-weight: 400; color: #d8d8d8; }

.chart-tools { height: 33px; display: flex; align-items: center; background: #0f0f0f; padding-left: 12px; flex: none; }
.ct { width: 24px; height: 18px; margin-right: 16.6px; background: #262626; border-radius: 2px; padding: 0; display: flex; align-items: center; justify-content: center; color: #0c0c0c; font-size: 12px; font-weight: 700; }
.ct svg { width: 24px; height: 18px; fill: none; stroke: #0c0c0c; stroke-width: 1.8; }
.ct.on { background: #b88a1e; }
.ct.txt { letter-spacing: .5px; }
.ct.strike { text-decoration: line-through; }
.ring { width: 24px; height: 24px; border: 3px solid #262626; border-radius: 50%; margin-left: 11px; box-sizing: border-box; }
.dot-btn { width: 22px; height: 22px; background: #1c1c1c; border-radius: 50%; margin-left: 13px; display: flex; align-items: center; justify-content: center; }
.dot-btn i { width: 6px; height: 6px; border-radius: 50%; background: #555; }

.nav-data { height: 125px; background: #1e1e1e; padding: 9px 0 0 12px; box-sizing: border-box; flex: none; }
.nav-row { display: flex; height: 61px; position: relative; }
.nav-c { display: flex; flex-direction: column; line-height: 16.5px; font-size: 15.5px; color: #9a9a9a; }
.nav-c b { font-weight: 500; color: #eee; font-size: 16px; }
.nav-c b u { font-weight: 400; }
.c1 { width: 104.5px; }
.c2 { width: 103px; }
.c3 { width: 200px; }
.c3 b { font-size: 15.5px; }
.c3b { width: 103px; margin-left: 2px; }
.rot { display: flex; align-items: center; gap: 10px; }
.dimmed span, .dimmed b { color: #555; font-weight: 400; }
.kebab { position: absolute; left: 381px; top: 14px; width: 4px; display: flex; flex-direction: column; gap: 3px; }
.kebab i { width: 4px; height: 4px; border-radius: 50%; background: #eee; }

.leg-head { height: 37px; display: flex; align-items: center; background: #000; padding-left: 15px; flex: none; }
.burger { width: 18px; height: 14px; color: #eee; }
.leg-title { margin-left: 19px; color: #eee; font-size: 15px; }
.arrow { width: 12px; height: 16px; color: #eee; margin-right: 18px; stroke-width: 1.6; }
.arrow.off { color: #444; margin-right: 24px; }

.tabs { height: 42px; display: flex; background: #161616; padding-left: 2px; flex: none; }
.tab { width: 52px; display: flex; align-items: center; justify-content: center; color: #eee; box-sizing: border-box; }
.tab:first-child { width: 48px; margin-right: 2px; }
.tab.current { background: #262626; border-radius: 3px 3px 0 0; }
.tab .ic { width: 24px; height: 24px; stroke-width: 1.8; }

.leg-info { height: 138px; display: flex; background: #202020; flex: none; }
.leg-left { width: 347px; padding: 8px 0 0 12px; box-sizing: border-box; }
.leg-name { color: #eee; font-size: 15.5px; line-height: 20px; letter-spacing: .2px; }
.kv { display: flex; align-items: baseline; font-size: 14.8px; line-height: 20px; color: #8d8d8d; letter-spacing: .15px; }
.kv s { flex: 1; border-bottom: 1px dotted #3b3b3b; margin: 0 4px; height: 12px; }
.kv b { font-weight: 500; color: #e6e6e6; white-space: nowrap; }
.kv b i { font-weight: 400; color: #8d8d8d; }
.eta1 { margin-top: 3px; }
.kv-active { margin-top: 6px; }
.legeta { margin-top: 2px; }
.wp3 { margin-top: 5px; margin-left: -4px; height: 25px; align-items: center; justify-content: space-between; }
.wp3 em { width: 139px; height: 25px; line-height: 25px; padding-left: 4px; background: linear-gradient(#363636, #2c2c2c); border-radius: 3px; color: #eee; box-sizing: border-box; }
.leg-btns { margin-left: 19px; padding-top: 41px; display: flex; flex-direction: column; gap: 7px; }
.sq-btn { width: 48px; height: 40px; border: 0; border-radius: 4px; background: #303030; display: flex; align-items: center; justify-content: center; padding: 0; }
.sq-btn svg { width: 24px; height: 24px; fill: none; stroke: #eee; stroke-width: 1.6; }

.leg-stats { height: 79px; display: flex; gap: 16px; background: #181818; padding: 5px 0 0 12px; box-sizing: border-box; flex: none; }
.stat-col { width: 230px; }
.stat-col.narrow { width: 149px; }
.stat-col .kv { height: 22.5px; line-height: 22.5px; }
.xtd { position: relative; padding-right: 0; }
.xtd .tri-l { margin-left: 3px; align-self: center; }

.tunnel { flex: 1; min-height: 0; }
.tunnel svg { display: block; }
</style>

<style>
html, body { margin: 0; background: #141414; }
</style>
